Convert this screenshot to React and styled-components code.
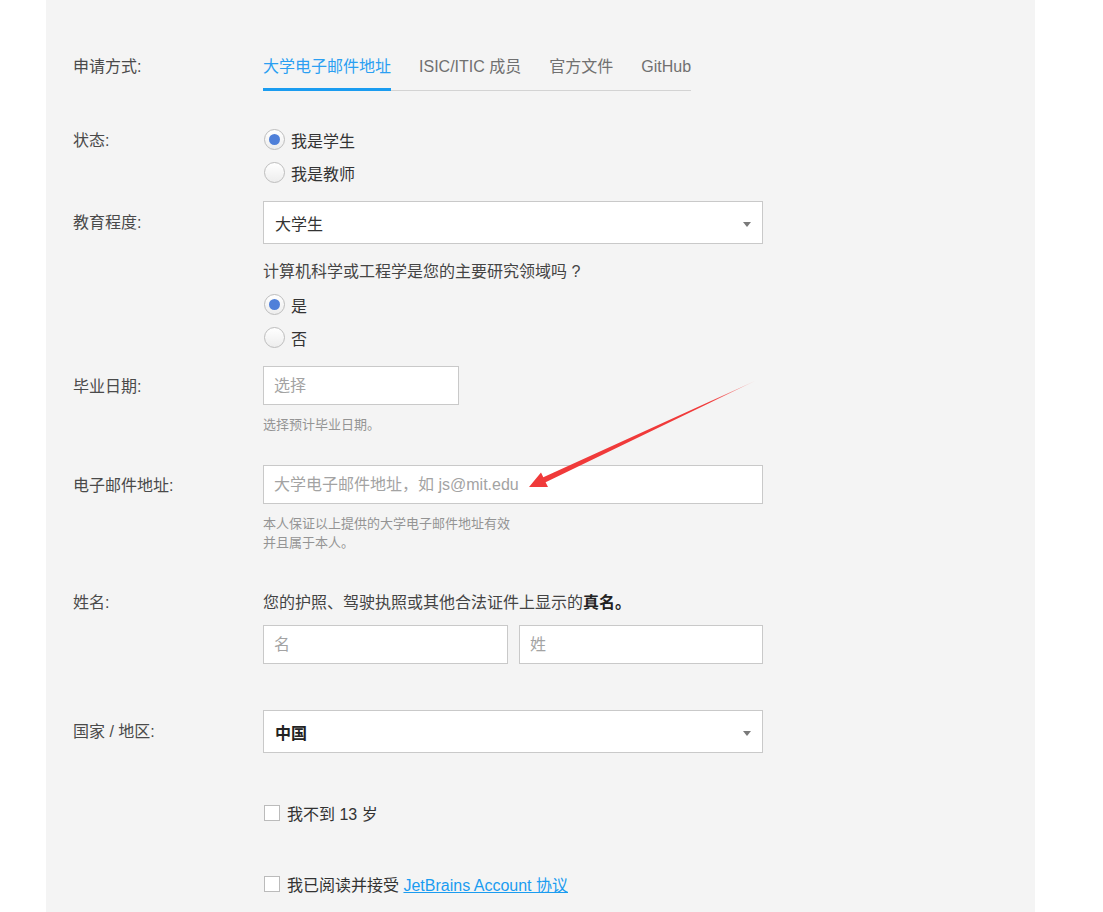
import React from 'react';
import styled, { createGlobalStyle } from 'styled-components';

const GlobalStyle = createGlobalStyle`
  html, body {
    margin: 0;
    padding: 0;
    background: #fff;
  }
  body {
    font-family: "Liberation Sans", "Noto Sans CJK SC", sans-serif;
    color: #333;
    overflow: hidden;
  }
  * {
    box-sizing: border-box;
  }
`;

const tabs = ['大学电子邮件地址', 'ISIC/ITIC 成员', '官方文件', 'GitHub'];

const App = () => {
  return (
    <Page>
      <GlobalStyle />
      <Panel>
        <Row $mt={0}>
          <Label $lh={22}>申请方式:</Label>
          <div>
            <Tabs>
              {tabs.map((t, i) => (
                <Tab key={t} $active={i === 0}>
                  {t}
                </Tab>
              ))}
            </Tabs>
          </div>
        </Row>

        <Row $mt={32}>
          <Label $lh={35}>状态:</Label>
          <div>
            <RadioOption>
              <Radio $checked />
              我是学生
            </RadioOption>
            <RadioOption>
              <Radio />
              我是教师
            </RadioOption>
          </div>
        </Row>

        <Row $mt={12}>
          <Label $lh={43}>教育程度:</Label>
          <Select>
            大学生
            <Caret />
          </Select>
        </Row>

        <Row $mt={17}>
          <Label $lh={22} />
          <div>
            <Text>计算机科学或工程学是您的主要研究领域吗 ?</Text>
            <RadioGroup>
              <RadioOption>
                <Radio $checked />
                是
              </RadioOption>
              <RadioOption>
                <Radio />
                否
              </RadioOption>
            </RadioGroup>
          </div>
        </Row>

        <Row $mt={12}>
          <Label $lh={42}>毕业日期:</Label>
          <div>
            <Input $width={196} placeholder='选择' readOnly />
            <Hint>选择预计毕业日期。</Hint>
          </div>
        </Row>

        <Row $mt={31}>
          <Label $lh={42}>电子邮件地址:</Label>
          <div>
            <Input placeholder='大学电子邮件地址，如 js@mit.edu' readOnly />
            <Hint>
              本人保证以上提供的大学电子邮件地址有效
              <br />
              并且属于本人。
            </Hint>
          </div>
        </Row>

        <Row $mt={40}>
          <Label $lh={22}>姓名:</Label>
          <div>
            <Text>
              您的护照、驾驶执照或其他合法证件上显示的<b>真名。</b>
            </Text>
            <NameRow>
              <Input placeholder='名' readOnly />
              <Input placeholder='姓' readOnly />
            </NameRow>
          </div>
        </Row>

        <Row $mt={46}>
          <Label $lh={43}>国家 / 地区:</Label>
          <Select $bold>
            中国
            <Caret />
          </Select>
        </Row>

        <Row $mt={49}>
          <Label $lh={22} />
          <CheckOption>
            <Checkbox />
            <span>我不到 13 岁</span>
          </CheckOption>
        </Row>

        <Row $mt={49}>
          <Label $lh={22} />
          <CheckOption>
            <Checkbox />
            <span>
              我已阅读并接受 <Link href='#'>JetBrains Account 协议</Link>
            </span>
          </CheckOption>
        </Row>
      </Panel>

      <Arrow viewBox='0 0 1103 912'>
        <defs>
          <linearGradient id='tail' x1='756' y1='381' x2='640' y2='435' gradientUnits='userSpaceOnUse'>
            <stop offset='0' stopColor='#f03a3a' stopOpacity='0.25' />
            <stop offset='0.4' stopColor='#f03a3a' stopOpacity='1' />
            <stop offset='1' stopColor='#f03a3a' stopOpacity='1' />
          </linearGradient>
        </defs>
        <polygon
          points='529,487 548,487 545.6,482.3 756,380.5 543.3,477.3 541,472.5'
          fill='url(#tail)'
        />
      </Arrow>
    </Page>
  );
};

export default App;

const Page = styled.div`
  position: relative;
  width: 1103px;
  height: 912px;
  overflow: hidden;
`;

const Panel = styled.div`
  width: 989px;
  min-height: 912px;
  margin-left: 46px;
  padding: 56px 0 0 27px;
  background: #f4f4f4;
`;

const Row = styled.div`
  display: grid;
  grid-template-columns: 190px 500px;
  margin-top: ${(p) => p.$mt}px;
`;

const Label = styled.div`
  font-size: 16px;
  line-height: ${(p) => p.$lh}px;
  color: #4a4a4a;
  white-space: nowrap;
`;

const Tabs = styled.div`
  display: flex;
  width: fit-content;
  gap: 28px;
  border-bottom: 1px solid #d3d3d3;
`;

const Tab = styled.div`
  font-size: 16px;
  line-height: 22px;
  padding-bottom: 10px;
  margin-bottom: -1px;
  border-bottom: 3px solid ${(p) => (p.$active ? '#1a9cf0' : 'transparent')};
  color: ${(p) => (p.$active ? '#2b9ff2' : '#707070')};
  white-space: nowrap;
  cursor: pointer;
`;

const RadioGroup = styled.div`
  margin-top: 5px;
`;

const RadioOption = styled.label`
  display: flex;
  align-items: center;
  gap: 6px;
  height: 33px;
  font-size: 16px;
  color: #333;
`;

const Radio = styled.span`
  position: relative;
  width: 21px;
  height: 21px;
  margin-left: 1px;
  border-radius: 50%;
  border: 1px solid #bdbdbd;
  background: linear-gradient(#ffffff, #ededed);
  flex-shrink: 0;

  &::after {
    content: '';
    display: ${(p) => (p.$checked ? 'block' : 'none')};
    position: absolute;
    left: 4px;
    top: 4px;
    width: 11px;
    height: 11px;
    border-radius: 50%;
    background: #4f80d9;
  }
`;

const Select = styled.div`
  display: flex;
  align-items: center;
  justify-content: space-between;
  height: 43px;
  padding: 0 11px 0 11px;
  border: 1px solid #c9c9c9;
  background: #fff;
  font-size: 16px;
  font-weight: ${(p) => (p.$bold ? 'bold' : 'normal')};
  color: ${(p) => (p.$bold ? '#222' : '#333')};
`;

const Caret = styled.span`
  width: 0;
  height: 0;
  margin-top: 3px;
  border-left: 4px solid transparent;
  border-right: 4px solid transparent;
  border-top: 5px solid #7a7a7a;
`;

const Text = styled.div`
  font-size: 16px;
  line-height: 22px;
  color: #444;
  white-space: nowrap;

  b {
    color: #222;
  }
`;

const Input = styled.input`
  display: block;
  width: ${(p) => (p.$width ? `${p.$width}px` : '100%')};
  height: 39px;
  padding: 0 10px;
  border: 1px solid #c9c9c9;
  background: #fff;
  font: inherit;
  font-size: 16px;
  color: #333;
  outline: none;

  &::placeholder {
    color: #a3a3a3;
  }
`;

const Hint = styled.div`
  margin-top: 10px;
  font-size: 13px;
  line-height: 19px;
  color: #949494;
`;

const NameRow = styled.div`
  display: grid;
  grid-template-columns: 245px 244px;
  gap: 11px;
  margin-top: 11px;
`;

const CheckOption = styled.label`
  display: flex;
  align-items: center;
  gap: 7px;
  height: 22px;
  font-size: 16px;
  color: #333;
  white-space: pre;
`;

const Checkbox = styled.span`
  width: 16px;
  height: 16px;
  margin-left: 1px;
  border: 1px solid #bbb;
  background: #fff;
  flex-shrink: 0;
`;

const Link = styled.a`
  color: #1a9cf0;
  text-decoration: underline;
`;

const Arrow = styled.svg`
  position: absolute;
  left: 0;
  top: 0;
  width: 1103px;
  height: 912px;
  pointer-events: none;
`;
